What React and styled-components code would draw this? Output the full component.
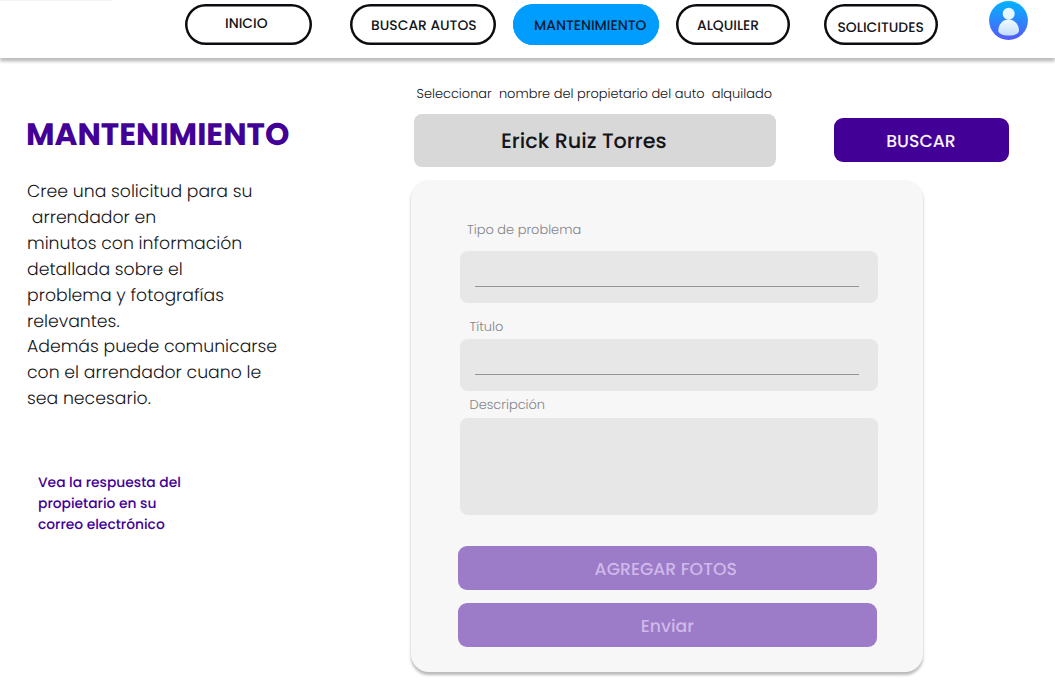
import React from "react";
import styled, { createGlobalStyle } from "styled-components";

const GlobalStyle = createGlobalStyle`
  * { box-sizing: border-box; }
  html, body { margin: 0; padding: 0; background: #fff; overflow: hidden; }
  body {
    font-family: Poppins, Inter, "Open Sans", sans-serif;
    text-rendering: geometricPrecision;
    color: #14151a;
  }
  button { font: inherit; text-rendering: inherit; letter-spacing: 0; }
`;

const Page = styled.div`
  width: 1055px;
  height: 681px;
  overflow: hidden;
`;

const Header = styled.header`
  height: 58px;
  display: flex;
  align-items: flex-start;
  padding: 4px 0 0 184.5px;
  background: linear-gradient(#f4f4f4, #f4f4f4) 0 0 / 112px 1px no-repeat, #fff;
  box-shadow: 0 3.5px 3px rgba(0, 0, 0, 0.26);
`;

const NavPill = styled.button`
  width: ${(p) => p.$width}px;
  height: 41px;
  margin: 0 ${(p) => p.$gap}px 0 0;
  padding: ${(p) => p.$top}px 0 0 ${(p) => p.$left}px;
  display: flex;
  align-items: flex-start;
  flex: none;
  border: 0;
  border-radius: 20.5px;
  background: ${(p) => (p.$active ? "#009dff" : "#fff")};
  box-shadow: inset 0 0 0 2.5px ${(p) => (p.$active ? "#009dff" : "#0b0b10")};
  color: ${(p) => (p.$active ? "#0a1a33" : "#14151a")};
  font-size: 13.86px;
  font-weight: 500;
  line-height: 21px;
  white-space: nowrap;
`;

const Avatar = styled.svg`
  width: 39px;
  height: 40px;
  margin-top: -3px;
  flex: none;
`;

const Main = styled.main`
  display: flex;
  align-items: flex-start;
`;

const Intro = styled.section`
  width: 410px;
  flex: none;
  padding: 53px 0 0 26px;
`;

const Title = styled.h1`
  margin: 0;
  font-size: 31.1px;
  font-weight: 700;
  line-height: 47px;
  color: #420097;
`;

const Copy = styled.p`
  margin: 22px 0 0 1px;
  font-size: 17.28px;
  font-weight: 300;
  line-height: 25.9px;
`;

const Line = styled.span`
  display: block;
  white-space: pre;
`;

const Note = styled.p`
  margin: 58.8px 0 0 12px;
  font-size: 13.84px;
  font-weight: 500;
  line-height: 20.8px;
  color: #420097;
`;

const Work = styled.section`
  flex: 1;
  padding-top: 26px;
`;

const SelectLabel = styled.div`
  margin-left: 6.5px;
  font-size: 12.96px;
  font-weight: 300;
  line-height: 20px;
  white-space: pre;
`;

const SearchRow = styled.div`
  display: flex;
  align-items: center;
  gap: 57.5px;
  margin: 10px 0 0 4px;
`;

const OwnerSelect = styled.div`
  width: 362px;
  height: 52.5px;
  padding: 1px 0 0 87px;
  border-radius: 8px;
  background: #d8d8d8;
  font-size: 20.75px;
  font-weight: 500;
  line-height: 54px;
`;

const SolidButton = styled.button`
  width: ${(p) => p.$width}px;
  height: 44px;
  margin: 0;
  padding: 3px ${(p) => p.$trim || 0}px 0 0;
  border: 0;
  border-radius: 9px;
  background: ${(p) => (p.$muted ? "#9c7bc9" : "#420097")};
  color: ${(p) => (p.$muted ? "#cfb9e8" : "#f7f2fc")};
  font-size: 17.28px;
  font-weight: 500;
  line-height: 26px;
  text-align: center;
`;

const Card = styled.form`
  width: 512.5px;
  height: 492px;
  margin: 13.5px 0 0 0.5px;
  padding: 40px 0 0 47.5px;
  border-radius: 18px;
  background: #f7f7f7;
  box-shadow: 0 3px 3px rgba(0, 0, 0, 0.28);
`;

const FieldLabel = styled.label`
  display: block;
  margin: ${(p) => p.$top || 0}px 0 0 ${(p) => p.$left}px;
  font-size: 12.96px;
  font-weight: 300;
  line-height: 20px;
  color: #85858a;
`;

const Field = styled.div`
  width: 418px;
  height: ${(p) => p.$height}px;
  margin: ${(p) => p.$top}px 0 0 2px;
  padding: 35px 19px 0 14.5px;
  border-radius: 8px;
  background: #e7e7e7;
`;

const Rule = styled.div`
  height: 1px;
  background: #949494;
`;

const Actions = styled.div`
  display: flex;
  flex-direction: column;
  gap: 13px;
  margin-top: 31px;
`;

const nav = [
  { label: "INICIO", width: 127.5, gap: 38, left: 40.5, top: 9 },
  { label: "BUSCAR AUTOS", width: 146, gap: 17, left: 21, top: 10.5 },
  { label: "MANTENIMIENTO", width: 146, gap: 17, left: 21, top: 10.5, active: true },
  { label: "ALQUILER", width: 114, gap: 33.5, left: 21, top: 10.5 },
  { label: "SOLICITUDES", width: 114, gap: 51.5, left: 14, top: 13 },
];

const copy = [
  "Cree una solicitud para su",
  " arrendador en",
  "minutos con información",
  "detallada sobre el",
  "problema y fotografías",
  "relevantes.",
  "Además puede comunicarse",
  "con el arrendador cuano le",
  "sea necesario.",
];

const note = ["Vea la respuesta del", "propietario en su", "correo electrónico"];

function UserAvatar() {
  return (
    <Avatar viewBox="0 0 39 40" aria-label="Perfil">
      <defs>
        <linearGradient id="disc" x1="0" y1="0" x2="0" y2="1">
          <stop offset="0" stopColor="#00b5ff" />
          <stop offset="1" stopColor="#5558fa" />
        </linearGradient>
        <linearGradient id="person" x1="0" y1="0" x2="0" y2="1">
          <stop offset="0" stopColor="#f2fbff" />
          <stop offset="1" stopColor="#c2ddfc" />
        </linearGradient>
      </defs>
      <circle cx="19.5" cy="19.5" r="19.4" fill="url(#disc)" />
      <circle cx="19.7" cy="12.8" r="6" fill="#e6f8ff" />
      <path
        d="M9.3 29.8C9.3 23.4 13.9 18.6 19.6 18.6S30 23.4 30 29.8C30 32.8 25.6 34.6 19.6 34.6S9.3 32.8 9.3 29.8Z"
        fill="url(#person)"
      />
    </Avatar>
  );
}

export default function App() {
  return (
    <Page>
      <GlobalStyle />
      <Header>
        {nav.map((n) => (
          <NavPill
            key={n.label}
            $width={n.width}
            $gap={n.gap}
            $left={n.left}
            $top={n.top}
            $active={n.active}
          >
            {n.label}
          </NavPill>
        ))}
        <UserAvatar />
      </Header>
      <Main>
        <Intro>
          <Title>MANTENIMIENTO</Title>
          <Copy>
            {copy.map((text) => (
              <Line key={text}>{text}</Line>
            ))}
          </Copy>
          <Note>
            {note.map((text) => (
              <Line key={text}>{text}</Line>
            ))}
          </Note>
        </Intro>
        <Work>
          <SelectLabel>{"Seleccionar  nombre del propietario del auto  alquilado"}</SelectLabel>
          <SearchRow>
            <OwnerSelect>Erick Ruiz Torres</OwnerSelect>
            <SolidButton $width={175}>BUSCAR</SolidButton>
          </SearchRow>
          <Card>
            <FieldLabel $left={9}>Tipo de problema</FieldLabel>
            <Field $height={52.5} $top={10.5}><Rule /></Field>
            <FieldLabel $top={13.5} $left={11.5}>Título</FieldLabel>
            <Field $height={52} $top={2.5}><Rule /></Field>
            <FieldLabel $top={4} $left={11.5}>Descripción</FieldLabel>
            <Field $height={97} $top={3} />
            <Actions>
              <SolidButton type="button" $muted $width={418.5} $trim={3}>AGREGAR FOTOS</SolidButton>
              <SolidButton type="button" $muted $width={418.5}>Enviar</SolidButton>
            </Actions>
          </Card>
        </Work>
      </Main>
    </Page>
  );
}
